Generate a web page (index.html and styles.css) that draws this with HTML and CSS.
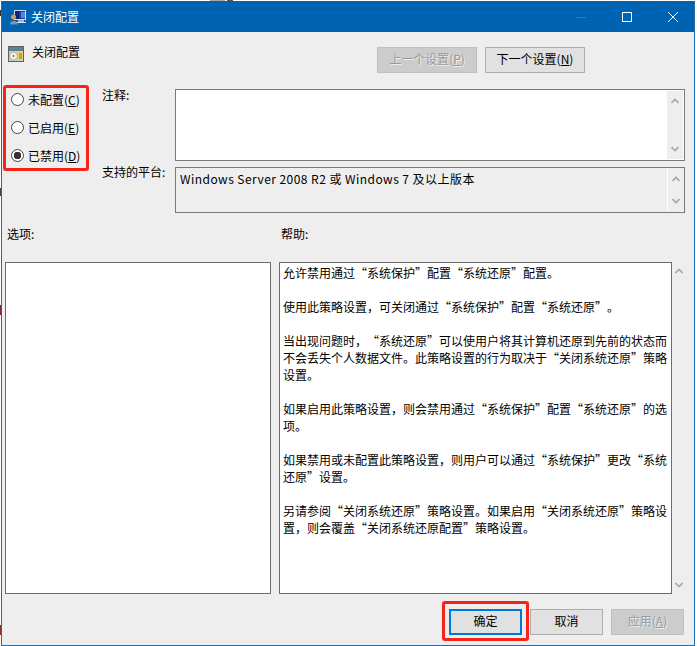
FILE: index.html
```html
<!DOCTYPE html>
<html lang="zh-CN">
<head>
    <meta charset="UTF-8">
    <meta name="viewport" content="width=device-width, initial-scale=1.0">
    <title>关闭配置</title>
    <link rel="stylesheet" href="styles.css">
</head>
<body>
    <div class="window">
        <!-- Barra de titulo -->
        <div class="titlebar">
            <svg class="title-icon" width="17" height="16" viewBox="0 0 17 16">
                <rect x="4" y="1" width="12" height="10" fill="#d5dbe3"/>
                <rect x="5" y="2" width="10" height="8" fill="#1a3fa8"/>
                <rect x="5" y="2" width="4" height="8" fill="#0f2470"/>
                <rect x="11" y="3" width="4" height="6" fill="#4f86e6"/>
                <rect x="8" y="11" width="6" height="2" fill="#aab2bc"/>
                <rect x="6" y="13" width="10" height="1" fill="#dfe3e8"/>
                <circle cx="3.5" cy="8" r="2.5" fill="#d39a62"/>
                <path d="M0 15.5 C0 10.5 7.5 10.5 7.5 15.5 Z" fill="#7d94b5"/>
            </svg>
            <span class="title-text">关闭配置</span>
            <div class="win-controls">
                <svg class="win-btn" width="46" height="32" viewBox="0 0 46 32"><path d="M18 16.5H28" stroke="#2f7fbf" fill="none"/></svg>
                <svg class="win-btn" width="46" height="32" viewBox="0 0 46 32"><rect x="18.5" y="11.5" width="9" height="9" stroke="#fff" fill="none"/></svg>
                <svg class="win-btn" width="46" height="32" viewBox="0 0 46 32"><path d="M18 11L28 21M28 11L18 21" stroke="#fff" fill="none"/></svg>
            </div>
        </div>

        <div class="content">
            <!-- Cabecera con nombre de la directiva -->
            <div class="head-row">
                <div class="policy-name">
                    <svg width="16" height="16" viewBox="0 0 16 16">
                        <rect x="0" y="0" width="16" height="16" fill="#59625f"/>
                        <rect x="1" y="1" width="14" height="2" fill="#3f9484"/>
                        <rect x="1" y="3" width="14" height="2" fill="#7d6f8c"/>
                        <rect x="1" y="5" width="14" height="10" fill="#cfd2c6"/>
                        <circle cx="5.5" cy="10" r="4" fill="#eef2e6" stroke="#7fa07e" stroke-width="0.7"/>
                        <circle cx="5.5" cy="10" r="1" fill="#6f7a72"/>
                        <rect x="10" y="6" width="5" height="8" fill="#e9cf6a"/>
                        <path d="M11 8H14M11 10H14M11 12H14" stroke="#5c5a48" stroke-width="0.8"/>
                    </svg>
                    <span class="policy-text">关闭配置</span>
                </div>
                <div class="nav-btns">
                    <button class="btn btn-wide" disabled>上一个设置(<u>P</u>)</button>
                    <button class="btn btn-wide">下一个设置(<u>N</u>)</button>
                </div>
            </div>

            <!-- Estado y comentario -->
            <div class="config-row">
                <div class="radios">
                    <label class="radio-item"><input type="radio" name="state"><span>未配置(<u>C</u>)</span></label>
                    <label class="radio-item"><input type="radio" name="state"><span>已启用(<u>E</u>)</span></label>
                    <label class="radio-item"><input type="radio" name="state" checked><span>已禁用(<u>D</u>)</span></label>
                    <div class="mark mark-radios"></div>
                </div>
                <div class="field-labels">
                    <div class="field-label label-note">注释:</div>
                    <div class="field-label label-platform">支持的平台:</div>
                </div>
                <div class="fields">
                    <div class="box box-note">
                        <div class="box-text"></div>
                        <div class="scroll">
                            <svg width="8" height="6" viewBox="0 0 8 6"><path d="M0.5 5L4 1.5L7.5 5" class="chev"/></svg>
                            <svg width="8" height="6" viewBox="0 0 8 6"><path d="M0.5 1L4 4.5L7.5 1" class="chev"/></svg>
                        </div>
                    </div>
                    <div class="box box-platform">
                        <div class="box-text">Windows Server 2008 R2 或 Windows 7 及以上版本</div>
                        <div class="scroll">
                            <svg width="8" height="6" viewBox="0 0 8 6"><path d="M0.5 5L4 1.5L7.5 5" class="chev"/></svg>
                            <svg width="8" height="6" viewBox="0 0 8 6"><path d="M0.5 1L4 4.5L7.5 1" class="chev"/></svg>
                        </div>
                    </div>
                </div>
            </div>

            <!-- Opciones y ayuda -->
            <div class="panel-labels">
                <div>选项:</div>
                <div>帮助:</div>
            </div>
            <div class="panels">
                <div class="panel"></div>
                <div class="panel panel-help">
                    <p>允许禁用通过“系统保护”配置“系统还原”配置。</p>
                    <p>使用此策略设置，可关闭通过“系统保护”配置“系统还原”。</p>
                    <p>当出现问题时，“系统还原”可以使用户将其计算机还原到先前的状态而不会丢失个人数据文件。此策略设置的行为取决于“关闭系统还原”策略设置。</p>
                    <p>如果启用此策略设置，则会禁用通过“系统保护”配置“系统还原”的选项。</p>
                    <p>如果禁用或未配置此策略设置，则用户可以通过“系统保护”更改“系统还原”设置。</p>
                    <p>另请参阅“关闭系统还原”策略设置。如果启用“关闭系统还原”策略设置，则会覆盖“关闭系统还原配置”策略设置。</p>
                </div>
                <div class="scroll scroll-help">
                    <svg width="8" height="6" viewBox="0 0 8 6"><path d="M0.5 5L4 1.5L7.5 5" class="chev"/></svg>
                    <svg width="8" height="6" viewBox="0 0 8 6"><path d="M0.5 1L4 4.5L7.5 1" class="chev"/></svg>
                </div>
            </div>

            <!-- Botones inferiores -->
            <div class="footer-btns">
                <div class="ok-wrap">
                    <button class="btn btn-ok">确定</button>
                    <div class="mark mark-ok"></div>
                </div>
                <button class="btn">取消</button>
                <button class="btn" disabled>应用(<u>A</u>)</button>
            </div>
        </div>
    </div>
</body>
</html>
```

FILE: styles.css
```css
* {
    box-sizing: border-box;
}

/* Restos de las ventanas de atras, se ven solo en el borde */
body {
    margin: 0;
    padding: 1px 2px 0 1px;
    background-color: #fff;
    background-image:
        linear-gradient(90deg, transparent 210px, #aaa 210px, #aaa 225px, transparent 225px, transparent 227px, #555 227px, #555 233px, transparent 233px),
        linear-gradient(180deg, transparent 10px, #333 10px, #333 16px, transparent 16px, transparent 188px, #445 188px, #445 196px, transparent 196px, transparent 305px, #724 305px, #724 315px, transparent 315px, transparent 625px, #833 625px, #833 635px, transparent 635px);
    background-repeat: no-repeat;
    background-size: 100% 1px, 1px 100%;
    font-family: "Noto Sans CJK SC", "Liberation Sans", sans-serif;
    font-size: 12px;
    color: #000;
    text-spacing-trim: space-all;
}

/* Ventana */
.window {
    height: 645px;
    display: flex;
    flex-direction: column;
    border: 1px solid #1f6cab;
    border-top: 0;
    background: #eee;
}

.titlebar {
    height: 31px;
    flex: none;
    display: flex;
    align-items: center;
    padding-left: 8px;
    background: #0063b1;
    color: #fff;
}

.title-icon {
    margin-right: 4px;
}

.title-text {
    flex: 1;
    margin-top: -1px;
}

.win-controls {
    display: flex;
    margin-right: -2px;
}

.win-btn {
    display: block;
}

.content {
    flex: 1;
    padding: 15px 9px 0 3px;
}

/* Cabecera */
.head-row {
    display: flex;
    justify-content: space-between;
    height: 26px;
}

.policy-name {
    display: flex;
    gap: 8px;
    padding-left: 3px;
}

.policy-name svg {
    margin-top: -1px;
}

.policy-text {
    line-height: 11px;
    margin-top: -1px;
}

.nav-btns {
    display: flex;
    gap: 8px;
    margin-right: 100px;
}

/* Botones */
.btn {
    width: 73px;
    height: 26px;
    padding: 0 0 3px;
    border: 1px solid #adadad;
    background: #e1e1e1;
    font: inherit;
    color: #000;
}

.btn-wide {
    width: 100px;
}

.btn:disabled {
    background: #ccc;
    border-color: #bfbfbf;
    color: #9a9a9a;
    text-shadow: 1px 1px 0 #eee;
}

.btn-ok {
    display: block;
    border: 2px solid #0078d7;
}

.footer-btns {
    display: flex;
    justify-content: flex-end;
    gap: 8px;
    margin: 15px 1px 0 0;
}

.ok-wrap {
    position: relative;
}

/* Recuadros rojos */
.mark {
    position: absolute;
    border: 3px solid #f5231a;
    border-radius: 3px;
    pointer-events: none;
}

.mark-radios {
    top: -4px;
    left: -2px;
    width: 86px;
    height: 86px;
}

.mark-ok {
    top: -8px;
    left: -7px;
    right: -7px;
    bottom: -6px;
}

/* Estado */
.config-row {
    display: grid;
    grid-template-columns: 97px 73px 1fr;
    margin-top: 16px;
}

.radios {
    position: relative;
    display: flex;
    flex-direction: column;
    gap: 14px;
    padding: 3px 0 0 6px;
}

.radio-item {
    display: flex;
    align-items: center;
    gap: 4px;
    height: 14px;
    white-space: nowrap;
}

.radio-item input {
    appearance: none;
    width: 13px;
    height: 13px;
    margin: 0;
    border: 1px solid #444;
    border-radius: 50%;
    background: #fff;
    flex: none;
}

.radio-item input:checked {
    background: radial-gradient(circle, #333 0 3.5px, #fff 4px);
}

.field-label {
    line-height: 14px;
}

.label-note {
    margin-top: -1px;
}

.label-platform {
    margin-top: 63px;
}

.fields {
    display: flex;
    flex-direction: column;
    gap: 6px;
}

.box {
    display: flex;
    border: 1px solid #7a7a7a;
}

.box-note {
    height: 72px;
    background: #fff;
    padding-right: 1px;
}

.box-platform {
    height: 46px;
    background: #eee;
}

.box-text {
    flex: 1;
    padding: 2px 4px;
    line-height: 17px;
    letter-spacing: 0.45px;
}

.box-platform .box-text {
    border-right: 1px solid #fff;
}

.scroll {
    width: 16px;
    flex: none;
    display: flex;
    flex-direction: column;
    justify-content: space-between;
    align-items: center;
    padding: 7px 0;
    background: #eee;
}

.box-note .scroll {
    margin: 1px 0;
}

.box-platform .scroll {
    padding: 8px 0;
}

.chev {
    fill: none;
    stroke: #a6a6a6;
    stroke-width: 1.6;
}

.scroll svg {
    display: block;
}

/* Opciones y ayuda */
.panel-labels {
    display: grid;
    grid-template-columns: 274px 1fr;
    height: 49px;
    padding: 14px 0 0 2px;
    line-height: 14px;
}

.panels {
    display: grid;
    grid-template-columns: 266px 393px 1fr;
    column-gap: 8px;
    height: 332px;
}

.panel {
    border: 1px solid #6d6d6d;
    background: #fff;
}

.panel-help {
    padding: 1px 3px;
    line-height: 17px;
}

.panel-help p {
    margin: 0 0 17px;
}

.scroll-help {
    margin-left: -8px;
    width: 14px;
    padding: 6px 0;
}
```
